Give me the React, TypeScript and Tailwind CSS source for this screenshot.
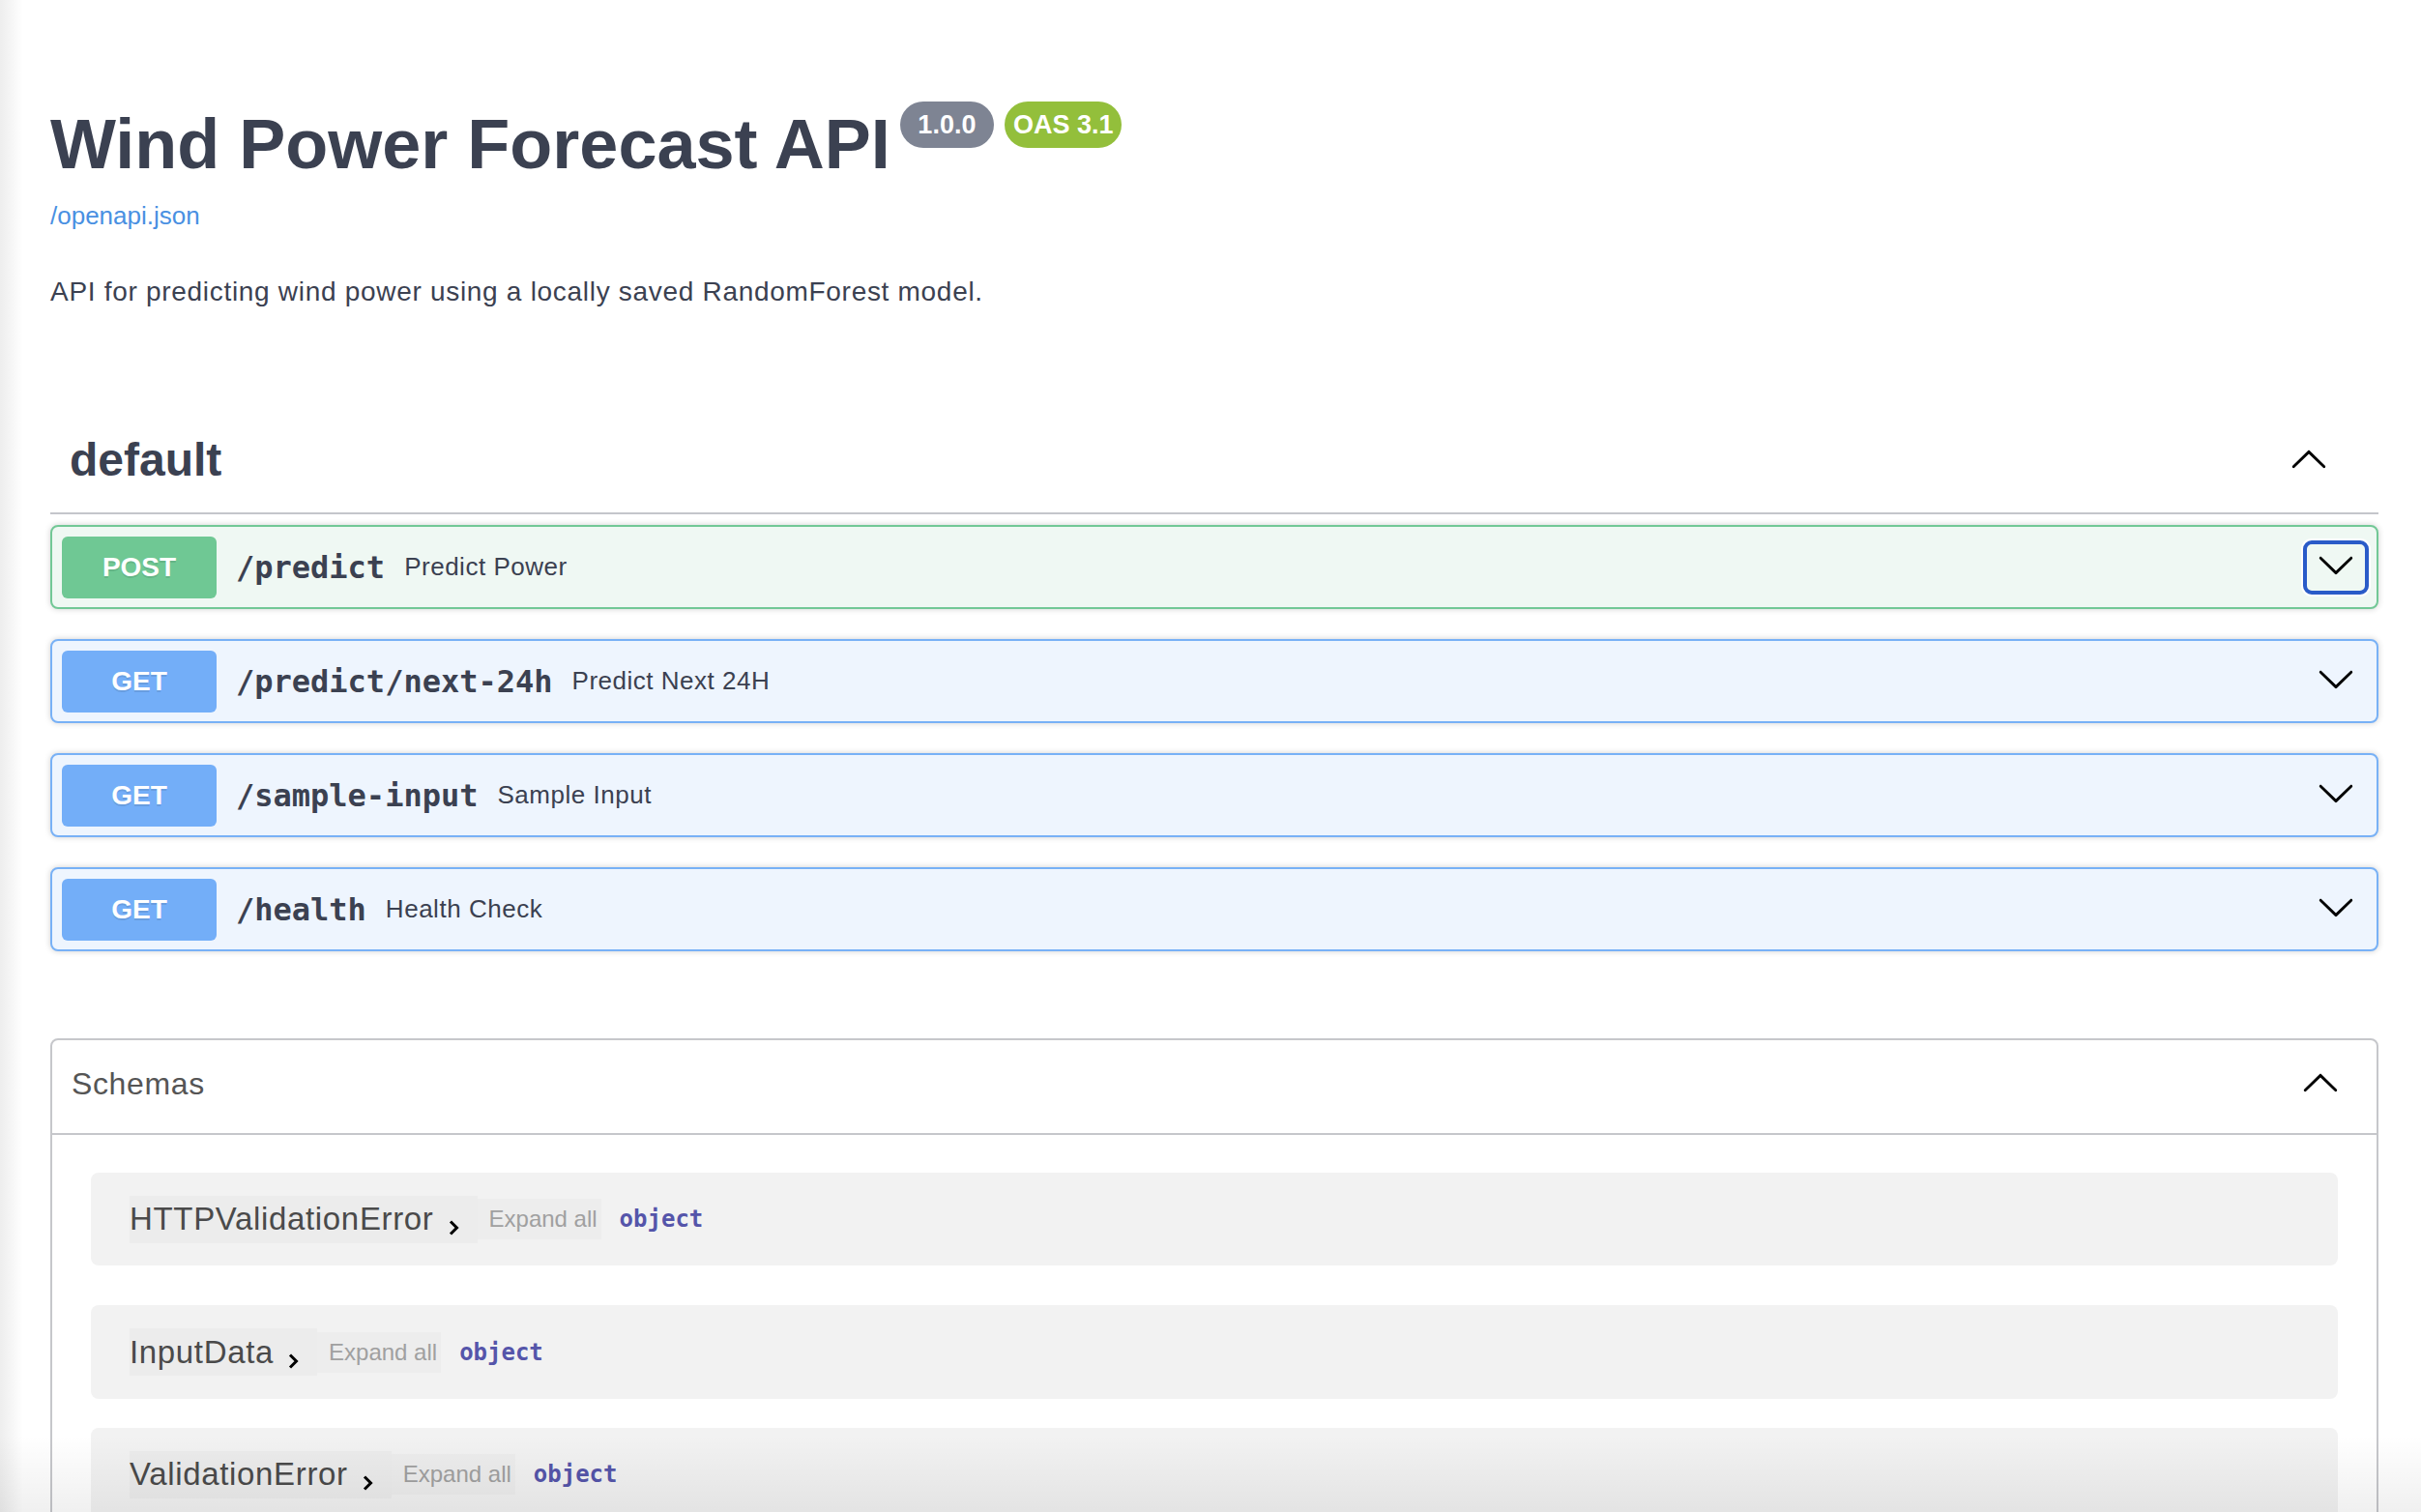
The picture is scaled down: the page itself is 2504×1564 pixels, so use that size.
import React from "react";

const sans = "font-['Liberation_Sans',Arial,sans-serif]";
const mono = "font-['DejaVu_Sans_Mono','Liberation_Mono',monospace]";

const Arrow = ({ className }: { className?: string }) => (
  <svg viewBox="0 0 20 20" className={className} fill="currentColor">
    <path d="M17.418 6.109c.272-.268.709-.268.979 0s.271.701 0 .969l-7.908 7.83c-.27.268-.707.268-.979 0l-7.908-7.83c-.27-.268-.27-.701 0-.969.271-.268.709-.268.979 0L10 13.25l7.418-7.141z" />
  </svg>
);

const ops = [
  { method: "POST", path: "/predict", summary: "Predict Power", post: true },
  { method: "GET", path: "/predict/next-24h", summary: "Predict Next 24H", post: false },
  { method: "GET", path: "/sample-input", summary: "Sample Input", post: false },
  { method: "GET", path: "/health", summary: "Health Check", post: false },
];

const models = [
  { name: "HTTPValidationError", box: "mt-[39px] h-[96px]" },
  { name: "InputData", box: "mt-[41px] h-[97px]" },
  { name: "ValidationError", box: "mt-[30px] h-[96px]" },
];

function Operation({ op }: { op: (typeof ops)[number] }) {
  return (
    <div
      className={
        "flex h-[87px] items-center rounded-[8px] border-2 px-[10px] shadow-[0_0_6px_rgba(0,0,0,0.19)] " +
        (op.post ? "border-[#72c896] bg-[#eff8f3]" : "border-[#78b1f6] bg-[#eef5fe]")
      }
    >
      <span
        className={
          "flex h-[64px] w-[160px] shrink-0 items-center justify-center rounded-[6px] text-[28px] font-bold text-white [text-shadow:0_2px_0_rgba(0,0,0,0.1)] " +
          (op.post ? "bg-[#6fc894]" : "bg-[#73aef8]")
        }
      >
        {op.method}
      </span>
      <span className={`${mono} px-[20px] text-[32px] font-bold text-[#3b4151]`}>{op.path}</span>
      <span className="flex-1 text-[26px] tracking-[0.02em] text-[#3b4151]">{op.summary}</span>
      {op.post ? (
        <span className="-mr-[2px] flex h-[56px] w-[68px] items-center justify-center rounded-[9px] border-[4px] border-[#2a5bc8] pb-[5px] shadow-[0_0_0_2px_white]">
          <Arrow className="h-[40px] w-[40px] text-black" />
        </span>
      ) : (
        <span className="flex h-[54px] w-[64px] items-center justify-center pb-[6px]">
          <Arrow className="h-[40px] w-[40px] text-black" />
        </span>
      )}
    </div>
  );
}

export default function App() {
  return (
    <div className={`${sans} relative h-[1564px] w-full overflow-hidden bg-white`}>
      <div className="pl-[52px] pr-[44px]">
        <div className="flex items-start pt-[105px]">
          <h2 className="mt-[8px] text-[72px] font-bold leading-[72px] text-[#3b4151]">Wind Power Forecast API</h2>
          <span className="ml-[10px] h-[48px] whitespace-pre rounded-full bg-[#7e8493] px-[11px] text-[27px] font-bold leading-[48px] text-white">
            {" 1.0.0 "}
          </span>
          <span className="ml-[11px] h-[48px] rounded-full bg-[#93bf3b] px-[9px] text-[27px] font-bold leading-[48px] text-white">
            OAS 3.1
          </span>
        </div>
        <a className="mt-[23px] block text-[26px] leading-[30px] text-[#4990e2]">/openapi.json</a>
        <p className="mt-[44px] text-[28px] leading-[40px] tracking-[0.025em] text-[#3b4151]">
          API for predicting wind power using a locally saved RandomForest model.
        </p>

        <div className="mt-[100px] flex h-[110px] items-center border-b-2 border-[#c4c6cb] pl-[20px] pr-[52px]">
          <h3 className="flex-1 text-[48px] font-bold text-[#3b4151]">default</h3>
          <Arrow className="h-[40px] w-[40px] rotate-180 text-black" />
        </div>

        <div className="mt-[11px] flex flex-col gap-[31px]">
          {ops.map((op) => (
            <Operation key={op.path} op={op} />
          ))}
        </div>

        <div className="mt-[90px] h-[600px] rounded-[8px] border-2 border-[#c6c7cb]">
          <div className="flex h-[98px] items-center border-b-2 border-[#c6c7cb] pb-[6px] pl-[20px] pr-[38px]">
            <h4 className="flex-1 text-[32px] tracking-[0.02em] text-[#555555]">Schemas</h4>
            <Arrow className="h-[40px] w-[40px] rotate-180 text-black" />
          </div>
          <div className="px-[40px]">
            {models.map((m) => (
              <div key={m.name} className={`${m.box} flex items-center rounded-[8px] bg-[#f2f2f2] pl-[40px]`}>
                <span className="flex h-[49px] items-center bg-black/[0.025] pr-[18px]">
                  <span className="text-[33px] tracking-[0.02em] text-[#4a4a4a]">{m.name}</span>
                  <svg viewBox="0 0 14 16" className="ml-[13px] mt-[18px] h-[16px] w-[14px]" fill="none" stroke="black" strokeWidth="3">
                    <polyline points="4,1.5 10.5,8 4,14.5" />
                  </svg>
                </span>
                <span className="flex h-[42px] items-center bg-black/[0.02] pl-[12px] pr-[4px] text-[24px] text-[#a0a0a0]">Expand all</span>
                <span className={`${mono} ml-[19px] text-[24px] font-bold text-[#5555aa]`}>object</span>
              </div>
            ))}
          </div>
        </div>
      </div>

      <div className="pointer-events-none absolute left-0 top-0 h-full w-[24px] bg-gradient-to-r from-black/[0.07] to-transparent" />
      <div className="pointer-events-none absolute bottom-0 left-0 h-[80px] w-full bg-gradient-to-b from-transparent to-black/[0.06]" />
    </div>
  );
}
